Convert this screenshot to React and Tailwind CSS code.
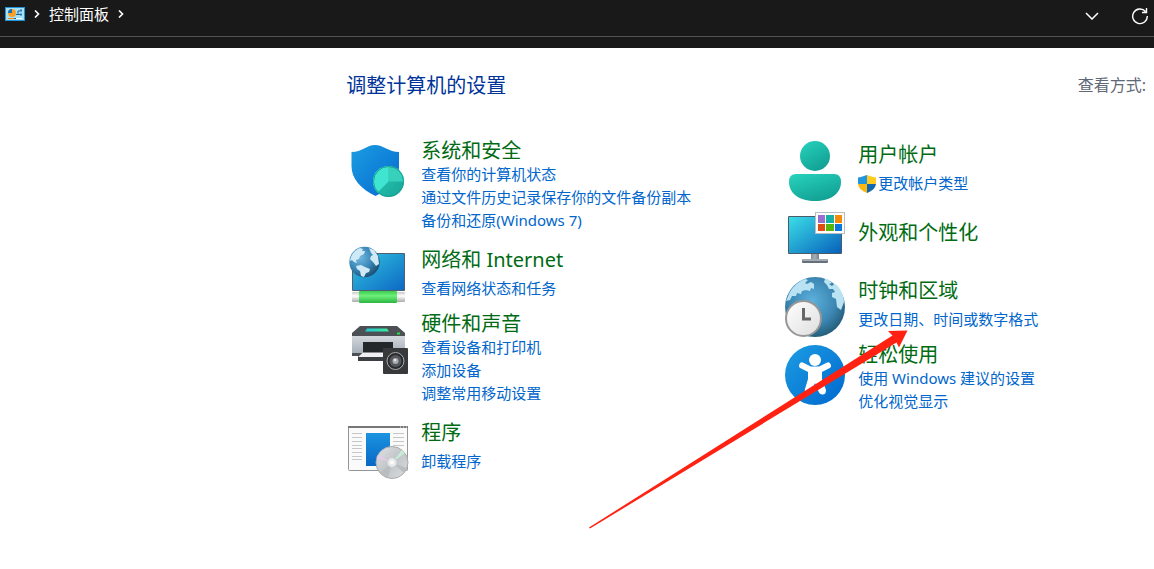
function SecurityIcon() {
  return (
    <svg viewBox="0 0 64 64" className="w-16 h-16 shrink-0" aria-hidden="true">
      <defs>
        <linearGradient id="secShield" x1="0" y1="0" x2="1" y2="1">
          <stop offset="0" stopColor="#1b9de2" />
          <stop offset="1" stopColor="#0669cf" />
        </linearGradient>
        <linearGradient id="secPie" x1="0" y1="0" x2="1" y2="1">
          <stop offset="0" stopColor="#2fc9b5" />
          <stop offset="1" stopColor="#15a598" />
        </linearGradient>
      </defs>
      <path d="M5.500 15C16 15 21 8 29 8s14 7 24 7V31c0 14-9 21-23.500 28C15 52 5.500 42 5.500 29z" fill="url(#secShield)" />
      <circle cx="42.500" cy="44.500" r="15.500" fill="url(#secPie)" />
      <path d="M42.500 44.500H58A15.500 15.500 0 0 0 42.500 29z" fill="#37d0ba" />
      <path d="M42.500 44.500V29A15.500 15.500 0 0 0 31.500 55.500z" fill="#3fe5d0" />
      <circle cx="42.500" cy="44.500" r="15" fill="none" stroke="#17a392" />
    </svg>
  );
}

function NetworkIcon() {
  return (
    <svg viewBox="0 0 64 64" className="w-16 h-16 shrink-0" aria-hidden="true">
      <defs>
        <linearGradient id="netScreen" x1="0" y1="0" x2="1" y2="1">
          <stop offset="0" stopColor="#31c6e0" />
          <stop offset="1" stopColor="#0d68c4" />
        </linearGradient>
        <radialGradient id="netGlobe" cx="0.35" cy="0.35" r="0.7">
          <stop offset="0" stopColor="#72b9e0" />
          <stop offset="0.6" stopColor="#3784b4" />
          <stop offset="1" stopColor="#1d4f72" />
        </radialGradient>
        <linearGradient id="netCable" x1="0" y1="0" x2="0" y2="1">
          <stop offset="0" stopColor="#3ccb50" />
          <stop offset="0.400" stopColor="#6df07a" />
          <stop offset="1" stopColor="#2bb541" />
        </linearGradient>
        <linearGradient id="netEnd" x1="0" y1="0" x2="0" y2="1">
          <stop offset="0" stopColor="#c9c9c9" />
          <stop offset="0.400" stopColor="#fff" />
          <stop offset="1" stopColor="#aaa" />
        </linearGradient>
      </defs>
      <rect x="6" y="7" width="53" height="38" rx="1" fill="#4d626e" />
      <rect x="7" y="8" width="51" height="36" fill="url(#netScreen)" />
      <rect x="6" y="46" width="53" height="10" rx="1" fill="url(#netEnd)" />
      <rect x="13" y="45" width="38" height="12" rx="1" fill="url(#netCable)" />
      <circle cx="18.500" cy="16" r="15.200" fill="url(#netGlobe)" />
      <path d="M4 15C5 8 9 4 14 2l3 1-1 2 3 0-1 3-4 2-1 3-3 1 1 3-3-1-2-2zM23 2l5 2 4 6 1 8-3 2-3-4-3-3 1-3 2-1-2-2zM10 20l5-1 4 2 5 2-1 3-3 1-2 4-3-1-1-5-3-2z" fill="#cfeaf6" />
    </svg>
  );
}

function HardwareIcon() {
  return (
    <svg viewBox="0 0 64 68" className="w-16 h-17 shrink-0" aria-hidden="true">
      <defs>
        <linearGradient id="hwBody" x1="0" y1="0" x2="0" y2="1">
          <stop offset="0" stopColor="#d3d7dc" />
          <stop offset="1" stopColor="#a7afb9" />
        </linearGradient>
        <linearGradient id="hwGlass" x1="0" y1="0" x2="1" y2="0">
          <stop offset="0" stopColor="#20c7d7" />
          <stop offset="1" stopColor="#3cea9a" />
        </linearGradient>
      </defs>
      <path d="M14 16H51L59 23V26H6V23z" fill="#4c4f53" />
      <path d="M21 18.500H41L43 21.500H19z" fill="url(#hwGlass)" />
      <rect x="51" y="22.500" width="3" height="2" fill="#24df48" />
      <rect x="6" y="26" width="53" height="17" fill="url(#hwBody)" />
      <path d="M6 43H59V46H54H6z" fill="#4c4f53" />
      <rect x="12" y="46" width="30" height="5" fill="#3b3e42" />
      <rect x="17" y="32" width="30" height="11" fill="#24272a" />
      <path d="M17 42.500H47V47H12z" fill="#f0f0f4" />
      <rect x="37" y="38" width="25" height="26" rx="1" fill="#37393b" />
      <circle cx="49.500" cy="51" r="8.500" fill="#292b2d" stroke="#a9abad" />
      <circle cx="49.500" cy="51" r="6" fill="#54585c" />
      <circle cx="49.500" cy="51" r="3" fill="#a9afb3" />
      <circle cx="49" cy="50" r="1" fill="#fff" />
    </svg>
  );
}

function ProgramsIcon() {
  return (
    <svg viewBox="0 0 64 64" className="w-16 h-16 shrink-0" aria-hidden="true">
      <defs>
        <linearGradient id="prgBlue" x1="0" y1="0" x2="0" y2="1">
          <stop offset="0" stopColor="#1a93e0" />
          <stop offset="1" stopColor="#0868c5" />
        </linearGradient>
        <linearGradient id="prgDisc" x1="0" y1="0" x2="1" y2="1">
          <stop offset="0" stopColor="#e2e4e5" />
          <stop offset="0.500" stopColor="#c1c5c7" />
          <stop offset="1" stopColor="#dcdfe0" />
        </linearGradient>
      </defs>
      <rect x="2.500" y="7.500" width="59" height="44" rx="1" fill="#fafafa" stroke="#969696" />
      <rect x="2" y="7" width="60" height="2" fill="#777" />
      <path d="M54 8h1M57 8h1M60 8h1" stroke="#eee" />
      <path d="M6 14.500h10M6 18.500h10M6 22.500h10M6 26.500h10M6 29.500h10M6 33.500h10M6 37.500h10M6 40.500h10M47 14.500h11M47 18.500h11M47 22.500h11M47 26.500h11" stroke="#c5c7c9" />
      <rect x="20" y="14" width="24" height="33" fill="url(#prgBlue)" />
      <circle cx="46" cy="43.500" r="16" fill="url(#prgDisc)" stroke="#a8acae" />
      <path d="M46 43.500L31 39A16 16 0 0 1 32 36z" fill="#e9c9ef" />
      <path d="M46 43.500L56 31A16 16 0 0 1 59 34z" fill="#c6ecd5" />
      <path d="M46 43.500L34 54A16 16 0 0 0 42 59zM46 43.500L61 49 58 54z" fill="#b9bdbf" />
      <circle cx="46" cy="43.500" r="5" fill="#e6e8e9" stroke="#c6c9cb" />
      <circle cx="46" cy="43.500" r="2" fill="#fff" />
    </svg>
  );
}

function UserIcon() {
  return (
    <svg viewBox="0 0 64 64" className="w-16 h-16 shrink-0" aria-hidden="true">
      <defs>
        <linearGradient id="usrTeal" x1="0.2" y1="0" x2="0.8" y2="1">
          <stop offset="0" stopColor="#26cfb9" />
          <stop offset="1" stopColor="#109c91" />
        </linearGradient>
      </defs>
      <circle cx="32" cy="15" r="15" fill="url(#usrTeal)" />
      <path d="M13 33H51Q58 33 58 41C58 53 47 60 32 60S6 53 6 41Q6 33 13 33z" fill="url(#usrTeal)" />
    </svg>
  );
}

function AppearanceIcon() {
  return (
    <svg viewBox="0 0 64 64" className="w-16 h-16 shrink-0" aria-hidden="true">
      <defs>
        <linearGradient id="appScreen" x1="0" y1="0" x2="1" y2="1">
          <stop offset="0" stopColor="#3bdde7" />
          <stop offset="1" stopColor="#0761bb" />
        </linearGradient>
        <linearGradient id="appStand" x1="0" y1="0" x2="1" y2="0">
          <stop offset="0" stopColor="#86909a" />
          <stop offset="0.500" stopColor="#a6aeb6" />
          <stop offset="1" stopColor="#76808a" />
        </linearGradient>
      </defs>
      <rect x="28" y="42" width="8" height="8" fill="url(#appStand)" />
      <rect x="19" y="48" width="26" height="4" rx="1" fill="#65707a" />
      <rect x="19" y="48" width="26" height="2" rx="1" fill="#a3abb3" />
      <rect x="5" y="5" width="54" height="38" rx="1" fill="#4b5c68" />
      <rect x="6" y="6" width="52" height="36" fill="url(#appScreen)" />
      <rect x="32.500" y="1.500" width="29" height="21" fill="#fff" stroke="#b9bdbf" />
      <rect x="35" y="4" width="7" height="8" fill="#9a6dd3" />
      <rect x="43" y="4" width="8" height="8" fill="#16b1a5" />
      <rect x="52" y="4" width="7" height="8" fill="#f38b08" />
      <rect x="35" y="13" width="7" height="7" fill="#df4d10" />
      <rect x="43" y="13" width="8" height="7" fill="#58b50a" />
      <rect x="52" y="13" width="7" height="7" fill="#0878dc" />
    </svg>
  );
}

function ClockIcon() {
  return (
    <svg viewBox="0 0 64 64" className="w-16 h-16 shrink-0" aria-hidden="true">
      <defs>
        <radialGradient id="clkGlobe" cx="0.45" cy="0.4" r="0.65">
          <stop offset="0" stopColor="#5cb0dd" />
          <stop offset="0.600" stopColor="#3c86b2" />
          <stop offset="1" stopColor="#20566f" />
        </radialGradient>
        <linearGradient id="clkFace" x1="0" y1="0" x2="1" y2="1">
          <stop offset="0" stopColor="#fff" />
          <stop offset="1" stopColor="#dedede" />
        </linearGradient>
      </defs>
      <circle cx="32" cy="30" r="30" fill="url(#clkGlobe)" />
      <path d="M4 22C7 12 14 5 22 2l3 1-3 3 2 1 4-2 3 2 0 5-3-1-1 3-4-1-4 1-1 3-4-1-1 3-4 0-2 4-4 1zM41 1l5 2 3 3-3 1 3 2 2-2 3 1c4 5 7 11 7 17l-3 8-4-3-1-8-4-2 0-4 3-1-2-3-4 0-2-4-3-3 1-3z" fill="#b9e2f3" />
      <circle cx="20.500" cy="41.500" r="17.500" fill="url(#clkFace)" stroke="#979797" strokeWidth="2" />
      <path d="M20.500 31V42H28" fill="none" stroke="#666" strokeWidth="3" />
    </svg>
  );
}

function AccessIcon() {
  return (
    <svg viewBox="0 0 64 64" className="w-16 h-16 shrink-0" aria-hidden="true">
      <defs>
        <linearGradient id="accBlue" x1="0" y1="0" x2="1" y2="1">
          <stop offset="0" stopColor="#1c9de3" />
          <stop offset="1" stopColor="#0068ce" />
        </linearGradient>
      </defs>
      <circle cx="32" cy="34" r="30" fill="url(#accBlue)" />
      <circle cx="32" cy="19" r="6" fill="#fff" />
      <path d="M19 24.500L27 28.500H37L45 24.500" fill="none" stroke="#fff" strokeWidth="6" strokeLinecap="round" strokeLinejoin="round" />
      <path d="M25 27H39V38L43 49Q43 54 39 53.500Q36 53 35 49L32 42 29 49Q27 54 24 53Q21 52 22 48L25 38z" fill="#fff" />
    </svg>
  );
}

function UacShield() {
  return (
    <svg viewBox="0 0 18 18" className="w-4.5 h-4.5 shrink-0" aria-hidden="true">
      <defs>
        <clipPath id="uacClip">
          <path d="M0 2.500C4 2.500 7 0 9 0s5 2.500 9 2.500V8c0 5-4 8-9 10C4 16 0 13 0 8z" />
        </clipPath>
      </defs>
      <g clipPath="url(#uacClip)">
        <rect width="9" height="9" fill="#2296dd" />
        <rect x="9" width="9" height="9" fill="#ffca22" />
        <rect y="9" width="9" height="9" fill="#fbb812" />
        <rect x="9" y="9" width="9" height="9" fill="#1267b3" />
      </g>
    </svg>
  );
}

function PanelIcon() {
  return (
    <svg viewBox="0 0 20 14" className="w-5 h-3.5" aria-hidden="true">
      <rect width="20" height="14" fill="#2493d1" />
      <rect x="1" y="1" width="18" height="12" fill="#a5e0f7" />
      <circle cx="7" cy="6" r="4" fill="#fc9f22" />
      <path d="M7 6V2A4 4 0 0 0 3 6z" fill="#1470b8" />
      <path d="M11 7.500h2V4h2M13 7.500h3" fill="none" stroke="#1766a2" />
      <path d="M15 3.500h2M15 7.500h2" stroke="#3077a9" strokeWidth="2" />
      <path d="M3 11.500h6" stroke="#fc8b18" />
      <path d="M10 11.500h7" stroke="#fff" />
      <path d="M9 11.500h2" stroke="#1766a2" />
    </svg>
  );
}

function Crumb() {
  return (
    <svg viewBox="0 0 6 8" className="w-1.5 h-2" aria-hidden="true">
      <path d="M1 0.500L4.500 4 1 7.500" fill="none" stroke="#fff" strokeWidth="1.600" />
    </svg>
  );
}

const leftItems = [
  {
    title: "系统和安全",
    Icon: SecurityIcon,
    links: ["查看你的计算机状态", "通过文件历史记录保存你的文件备份副本", "备份和还原(Windows 7)"],
    box: "pb-3.5",
  },
  { title: "网络和 Internet", Icon: NetworkIcon, links: ["查看网络状态和任务"], box: "" },
  {
    title: "硬件和声音",
    Icon: HardwareIcon,
    links: ["查看设备和打印机", "添加设备", "调整常用移动设置"],
    box: "pb-3.5",
  },
  { title: "程序", Icon: ProgramsIcon, links: ["卸载程序"], box: "" },
];

const rightItems = [
  { title: "用户帐户", Icon: UserIcon, links: ["更改帐户类型"], shield: true, box: "pb-1.5" },
  { title: "外观和个性化", Icon: AppearanceIcon, links: [], box: "pb-0.5", text: "pt-2" },
  { title: "时钟和区域", Icon: ClockIcon, links: ["更改日期、时间或数字格式"], box: "" },
  { title: "轻松使用", Icon: AccessIcon, links: ["使用 Windows 建议的设置", "优化视觉显示"], box: "" },
];

function Category({ item }) {
  const { title, Icon, links, shield, box, text } = item;

  return (
    <section className={`flex items-start gap-[11px] ${box}`}>
      <Icon />
      <div className={text}>
        <h2 className="text-xl leading-[27px] whitespace-nowrap">
          <a href="#" className="text-[#006b12] hover:underline">{title}</a>
        </h2>
        <ul className={links.length === 1 ? "mt-1" : "-mt-px"}>
          {links.map((link) => (
            <li key={link} className="text-[15px] leading-[23px] whitespace-nowrap">
              <a href="#" className="inline-flex items-center gap-0.5 align-top text-[#0066cc] hover:underline">
                {shield && <UacShield />}
                {link}
              </a>
            </li>
          ))}
        </ul>
      </div>
    </section>
  );
}

function App() {
  return (
    <div className="min-h-screen bg-white font-['Noto_Sans','Noto_Sans_CJK_SC',sans-serif] overflow-hidden">
      <header className="bg-[#191919] pb-[11px]">
        <div className="flex items-center justify-between h-[37px] pb-2 pl-[5px] pr-[5px] border-b border-[#535353]">
          <nav className="flex items-center gap-[9px] text-[15px] leading-5 text-white">
            <PanelIcon />
            <Crumb />
            <a href="#">控制面板</a>
            <Crumb />
          </nav>
          <div className="flex items-center gap-8 pt-1 text-white">
            <button aria-label="展开">
              <svg viewBox="0 0 14 8" className="w-3.5 h-2" fill="none" stroke="currentColor" strokeWidth="1.500">
                <path d="M1 1l6 6 6-6" />
              </svg>
            </button>
            <button aria-label="刷新">
              <svg viewBox="0 0 18 18" className="w-4.5 h-4.5" fill="none" stroke="currentColor" strokeWidth="1.400">
                <path d="M14.500 4.500A7.300 7.300 0 1 0 16.300 9M15.500 1v4.500H11" />
              </svg>
            </button>
          </div>
        </div>
      </header>

      <main className="relative pl-[30%] pr-2 pt-6">
        <div className="flex items-center justify-between h-[26px]">
          <h1 className="text-xl leading-[27px] text-[#003399]">调整计算机的设置</h1>
          <span className="text-base text-[#5f6876]">查看方式:</span>
        </div>

        <div className="grid grid-cols-[437px_1fr] pt-[39px]">
          <div>
            {leftItems.map((item) => (
              <Category key={item.title} item={item} />
            ))}
          </div>
          <div className="pt-1">
            {rightItems.map((item) => (
              <Category key={item.title} item={item} />
            ))}
          </div>
        </div>

        {/* red pointer drawn over the list */}
        <svg
          viewBox="0 0 320 200"
          className="absolute left-[588px] top-[281px] w-80 h-50 pointer-events-none"
          aria-hidden="true"
        >
          <path d="M1 198.500L304.500 6.500 300 2 319.500 1.500 311 18.500 308.500 13.500 2 199.500z" fill="#ff2213" />
        </svg>
      </main>
    </div>
  );
}

export default App;
